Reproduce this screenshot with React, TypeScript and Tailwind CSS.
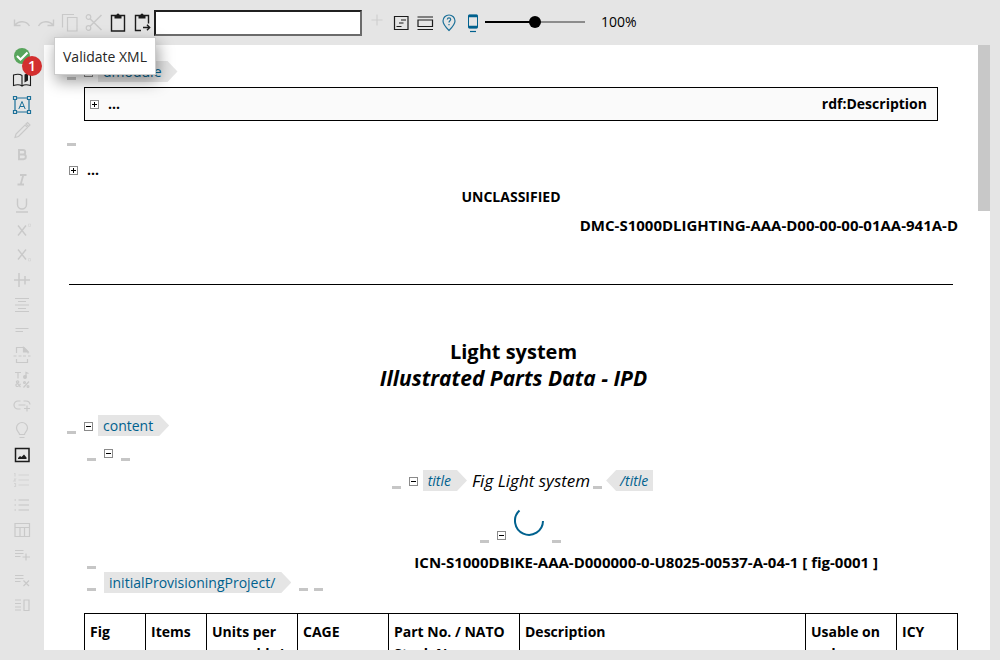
import type { ReactNode } from "react";

type IconDef = { name: string; tone: string; art: ReactNode };

const FAINT = "text-[#c9c9c9]";
const DARK = "text-[#1c1c1c]";
const BLUE = "text-[#1d7199]";

function Icon({ children }: { children: ReactNode }) {
  return (
    <svg viewBox="0 0 24 24" className="size-6 shrink-0" fill="none" stroke="currentColor" strokeWidth="1.2" aria-hidden="true">
      {children}
    </svg>
  );
}

function ToolButton({ icon, first }: { icon: IconDef; first?: boolean }) {
  return (
    <button type="button" aria-label={icon.name} className={`flex w-6 shrink-0 items-center justify-center ${first ? "h-[22px]" : "h-6"} ${icon.tone}`}>
      <Icon>{icon.art}</Icon>
    </button>
  );
}

const editTools: IconDef[] = [
  { name: "Undo", tone: FAINT, art: <path d="M4.5 9.5v6h6M5 15c3.5-4.5 11.5-4.5 14.5 1" strokeWidth="1.4" /> },
  { name: "Redo", tone: FAINT, art: <path d="M19.5 9.5v6h-6M19 15c-3.5-4.5-11.5-4.5-14.5 1" strokeWidth="1.4" /> },
  { name: "Copy", tone: FAINT, art: <path d="M9.5 7.5h9.500v13.500H9.500zM4.500 17.500v-13H16" /> },
  {
    name: "Cut",
    tone: FAINT,
    art: (
      <>
        <circle cx="6.5" cy="7" r="2.3" />
        <circle cx="6.5" cy="18" r="2.3" />
        <path d="M8 8.700L19.500 20M8 16.300L19.500 5" strokeWidth="1.5" />
      </>
    ),
  },
  {
    name: "Paste",
    tone: DARK,
    art: (
      <>
        <path d="M5.500 5.500h13v15.500h-13z" strokeWidth="1.4" />
        <path d="M8.500 5h2a1.500 1.500 0 013 0h2v3.500h-7z" fill="currentColor" stroke="none" />
      </>
    ),
  },
  {
    name: "Paste as",
    tone: DARK,
    art: (
      <>
        <path d="M11 20.500H5.500v-15h13v8M13 17.500h6.500M17 14.800l2.700 2.700-2.700 2.700" strokeWidth="1.4" />
        <path d="M8.500 5h2a1.500 1.500 0 013 0h2v3.500h-7z" fill="currentColor" stroke="none" />
      </>
    ),
  },
];

const viewTools: IconDef[] = [
  { name: "Add", tone: "text-[#cfcfcf]", art: <path d="M12 4.500v11M6.500 10h11" /> },
  {
    name: "Show comments",
    tone: DARK,
    art: <path d="M5.500 6.500h13.500v13H5.500zM12 10h5M10 13h4.500M7.500 16.500h5" />,
  },
  { name: "Show blocks", tone: DARK, art: <path d="M4.500 7h15.500M4.500 19.500h15.500M5 10h14.500v6.500H5z" /> },
  {
    name: "Help location",
    tone: BLUE,
    art: (
      <>
        <path d="M12 20.500C8 16.500 6 14 6 11a6 6 0 0112 0c0 3-2 5.500-6 9.500z" />
        <path d="M10.300 9.500c.2-2.200 3.400-2 3.400 0 0 1.300-1.700 1.300-1.700 3M12 14v1.200" />
      </>
    ),
  },
  {
    name: "Device preview",
    tone: "text-[#00618e]",
    art: (
      <>
        <rect x="7.5" y="5" width="9" height="13" rx=".8" strokeWidth="1" />
        <path d="M7.500 6h9M7.500 17h9" strokeWidth="2.5" />
        <path d="M9 21.500h6" />
      </>
    ),
  },
];

const sideTools: IconDef[] = [
  {
    name: "Validate XML",
    tone: "text-[#58a55c]",
    art: (
      <>
        <circle cx="12" cy="12" r="8" fill="currentColor" stroke="none" />
        <path d="M7 12l3.500 3.500 7-7" stroke="#fff" strokeWidth="2.2" />
      </>
    ),
  },
  {
    name: "Dictionary",
    tone: DARK,
    art: (
      <>
        <path d="M12 17.500V7.500c-2-1.500-5.500-1.500-8.500-.5v10.500c3-1 6.500-1 8.500.5 2-1.500 5.500-1.500 8.500-.5V7l-2-.4" strokeWidth="1.1" />
        <path d="M14.500 6.500l3.500-1.500v7.500l-3.500 2z" fill="currentColor" stroke="none" />
      </>
    ),
  },
  {
    name: "Text frame",
    tone: BLUE,
    art: (
      <>
        <path d="M7 5h10M7 19h10M5 7v10M19 7v10" />
        <path d="M3.500 3.500h3v3h-3zM17.500 3.500h3v3h-3zM3.500 17.500h3v3h-3zM17.500 17.500h3v3h-3z" />
        <path d="M8.800 16L12 8.500l3.200 7.500M10 13.500h4" strokeWidth="1" />
      </>
    ),
  },
  { name: "Edit", tone: FAINT, art: <path d="M5 19.500l1-3.500 9-9 2.500 2.500-9 9zM16 6l1.500-1.500L20 7l-1.500 1.500z" /> },
  { name: "Bold", tone: FAINT, art: <path d="M9 7h4a2.200 2.200 0 010 4.400H9zM9 11.500h4.500a2.300 2.300 0 010 4.700H9z" strokeWidth="1.9" /> },
  { name: "Italic", tone: FAINT, art: <path d="M10 7h6.500M7.500 16.500h6.500M13.300 7L10.700 16.500" strokeWidth="1.8" /> },
  { name: "Underline", tone: FAINT, art: <path d="M7.500 5.500v6a4.500 4.500 0 009 0v-6M6 19h12" strokeWidth="1.4" /> },
  {
    name: "Superscript",
    tone: FAINT,
    art: (
      <>
        <path d="M8 7.500l8 10M16 7.500l-8 10" strokeWidth="1.4" />
        <path d="M18.500 6h2v2.500h-2z" strokeWidth=".4" />
      </>
    ),
  },
  {
    name: "Subscript",
    tone: FAINT,
    art: (
      <>
        <path d="M8 6.500l8 10M16 6.500l-8 10" strokeWidth="1.4" />
        <path d="M18.500 15.500h2V18h-2z" strokeWidth=".4" />
      </>
    ),
  },
  { name: "Align objects", tone: FAINT, art: <path d="M4 12h16M9 5v14M15 8v8.500" strokeWidth="1.5" /> },
  { name: "Center", tone: FAINT, art: <path d="M5 5.500h14M8 8.500h8M5 12h14M8 15.500h8M5 18.500h14" /> },
  { name: "Short lines", tone: FAINT, art: <path d="M5.500 10.500h13M5.500 13.500h7.500" /> },
  {
    name: "Page break",
    tone: FAINT,
    art: (
      <>
        <path d="M6.500 10V4.500h7.500l4 4v2M6.500 16v3.500h11V16M3.500 13h3M8.500 13h3M13 13h3M18 13h2.500" />
        <path d="M13.500 4.500v4.500H18z" fill="currentColor" />
      </>
    ),
  },
  {
    name: "Special characters",
    tone: FAINT,
    art: (
      <>
        <path d="M5 4.500h6M8 4.500v6M16 8.500V4.500l2.500 1" />
        <circle cx="15" cy="9" r="1.4" fill="currentColor" />
        <path d="M10.500 19L6.500 14.300c-.5-1.800 2.700-1.800 2.200 0L6 16.500c-.5 2.800 3 2.800 4.500-.8M19 13.500l-5.500 6" />
        <circle cx="14.5" cy="14.5" r=".9" />
        <circle cx="18" cy="18.5" r=".9" />
      </>
    ),
  },
  { name: "Add link", tone: FAINT, art: <path d="M10.500 8H8a4 4 0 000 8h2.500M13.500 8H16a4 4 0 014 3.500M8.500 12h7M17 12.500v6M14 15.500h6" /> },
  { name: "Hint", tone: FAINT, art: <path d="M9.500 16.500c0-2-3-3-3-6.500a5.500 5.500 0 0111 0c0 3.500-3 4.500-3 6.500zM9.500 19.500h5" /> },
  {
    name: "Insert image",
    tone: DARK,
    art: (
      <>
        <path d="M5.500 5.500h13.500v13H5.500z" strokeWidth="1.5" />
        <path d="M8 16v-1l2-2 1.500 1 2.500-2.500 2.500 3V16z" fill="currentColor" stroke="none" />
      </>
    ),
  },
  { name: "Numbered list", tone: "text-[#d4d4d4]", art: <path d="M8.500 7H19M8.500 12H19M8.500 17H19M4 5.500h1v3M4 11h1.500l-1.500 2h2M4 15.500h1.500v3H4" /> },
  { name: "Bulleted list", tone: "text-[#d0d0d0]", art: <path d="M8.500 7H19M8.500 12H19M8.500 17H19M4.500 7H6M4.500 12H6M4.500 17H6" strokeWidth="1.4" /> },
  { name: "Insert table", tone: FAINT, art: <path d="M5 5.500h14.500v13H5zM5 9.500h14.500M10 9.500v9M14.500 9.500v9" /> },
  { name: "Add row", tone: FAINT, art: <path d="M5 7.500h8.500M5 10.500h8.500M5 13.500h5.500M16 10.500v7M12.500 14h7.500" /> },
  { name: "Remove row", tone: FAINT, art: <path d="M5 7.500h8.500M5 10.500h8.500M5 13.500h5.500M13.500 12.500l5.500 5.500M19 12.500L13.500 18" /> },
  { name: "Columns", tone: FAINT, art: <path d="M5 7h6M5 10.500h6M5 14h6M5 17h6M14 7h5v10.500h-5z" /> },
];

function Dash() {
  return <span className="mb-0.5 h-[3px] w-[9px] shrink-0 bg-[#c6c6c6]" />;
}

function Toggle({ open }: { open?: boolean }) {
  return (
    <button
      type="button"
      aria-label={open ? "Collapse" : "Expand"}
      className="mb-[5px] flex size-[9px] shrink-0 items-center justify-center border border-[#8a8a8a] bg-white text-black"
    >
      <svg viewBox="0 0 7 7" className="size-[7px] shrink-0" stroke="currentColor" strokeWidth="1" aria-hidden="true">
        <path d={open ? "M1 3.500h5" : "M1 3.500h5M3.500 1v5"} />
      </svg>
    </button>
  );
}

function Tag({ children, end }: { children: ReactNode; end?: boolean }) {
  return (
    <span
      className={`h-[21px] bg-[#e5e5e5] text-sm/[21px] text-[#00618e] ${
        end
          ? "pr-[5px] pl-3.5 [clip-path:polygon(10px_0,100%_0,100%_100%,10px_100%,0_50%)]"
          : "pr-4 pl-[5px] [clip-path:polygon(0_0,calc(100%-10px)_0,100%_50%,calc(100%-10px)_100%,0_100%)]"
      }`}
    >
      {children}
    </span>
  );
}

const columns = [
  { label: "Fig", width: "w-[61px]" },
  { label: "Items", width: "w-[61px]" },
  { label: "Units per assembly/", width: "w-[91px]" },
  { label: "CAGE", width: "w-[91px]" },
  { label: "Part No. / NATO Stock No.", width: "w-[131px]" },
  { label: "Description", width: "" },
  { label: "Usable on code", width: "w-[91px]" },
  { label: "ICY", width: "w-[61px]" },
];

export default function App() {
  return (
    <div className="flex h-screen flex-col overflow-hidden bg-[#e5e5e5] font-['Open_Sans','Noto_Sans',sans-serif] text-sm text-black">
      <header className="flex h-[45px] shrink-0 items-start pt-2.5 pl-2.5">
        {editTools.map((t) => (
          <ToolButton key={t.name} icon={t} />
        ))}
        <input
          type="text"
          aria-label="Element"
          className="mr-[3px] h-[26px] w-52 border-2 border-t-[#202020] border-r-[#6b6b6b] border-b-[#6b6b6b] border-l-[#202020] bg-white px-1 outline-none"
        />
        {viewTools.map((t) => (
          <ToolButton key={t.name} icon={t} />
        ))}
        <input
          type="range"
          aria-label="Zoom"
          min="0"
          max="200"
          defaultValue="100"
          className="h-6 w-[100px] appearance-none bg-[linear-gradient(to_right,#000_50%,#8c8c8c_50%)] bg-[length:100%_2px] bg-center bg-no-repeat [&::-webkit-slider-thumb]:size-3 [&::-webkit-slider-thumb]:appearance-none [&::-webkit-slider-thumb]:rounded-full [&::-webkit-slider-thumb]:bg-black"
        />
        <span className="ml-4 text-sm/6">100%</span>
      </header>

      <div className="flex min-h-0 flex-1 pr-2.5 pb-2.5">
        <nav aria-label="Formatting" className="relative flex w-11 shrink-0 flex-col items-center gap-px">
          {sideTools.map((t, i) => (
            <ToolButton key={t.name} icon={t} first={i === 0} />
          ))}
          <span className="absolute top-[11px] left-[22px] flex size-5 items-center justify-center rounded-full bg-[#d32f2f] text-sm font-semibold text-white">
            1
          </span>
          <div
            role="tooltip"
            className="absolute -top-2 left-[54px] z-10 border border-[#cccccc] bg-white px-2 pt-0.5 text-sm/[34px] font-medium whitespace-nowrap text-[#262626] shadow-[2px_6px_16px_rgba(0,0,0,0.4)]"
          >
            Validate XML
          </div>
        </nav>

        <main className="min-w-0 flex-1 overflow-hidden bg-white pr-2 pl-[23px]">
          <div className="mt-4 flex items-end">
            <Dash />
            <span className="w-2" />
            <Toggle open />
            <span className="w-[5px]" />
            <Tag>dmodule</Tag>
          </div>

          <section className="mt-[5px] mr-[32px] ml-[17px] flex h-[34px] items-center border border-black bg-[#fafafa] pr-2.5 pl-[5px] font-bold">
            <span className="flex items-end gap-[9px]">
              <Toggle />
              <span>...</span>
            </span>
            <span className="ml-auto">rdf:Description</span>
          </section>

          <div className="mt-5 flex h-[7px] items-end">
            <Dash />
          </div>
          <div className="mt-3 flex h-5 items-end gap-[9px] pl-0.5 font-bold">
            <Toggle />
            <span className="leading-5">...</span>
          </div>

          <p className="mt-[3px] mr-[17px] ml-0.5 text-center leading-7 font-bold">UNCLASSIFIED</p>
          <p className="mr-3 text-right text-[15px]/7 font-bold">DMC-S1000DLIGHTING-AAA-D00-00-00-01AA-941A-D</p>
          <hr className="mt-[45px] mr-[17px] ml-0.5 border-t border-black" />

          <h1 className="mt-[53px] mr-3 ml-0.5 text-center text-xl/[27px] font-bold">
            Light system
            <em className="block text-[21px]/[27px]">Illustrated Parts Data - IPD</em>
          </h1>

          <div className="mt-[23px] flex items-end">
            <Dash />
            <span className="w-2" />
            <Toggle open />
            <span className="w-[5px]" />
            <Tag>content</Tag>
          </div>
          <div className="mt-1.5 flex h-[21px] items-end gap-2 pl-5">
            <Dash />
            <Toggle open />
            <Dash />
          </div>

          <div className="mt-[7px] ml-2 flex items-end justify-center italic">
            <Dash />
            <span className="w-2" />
            <Toggle open />
            <span className="w-[5px]" />
            <Tag>title</Tag>
            <span className="mr-[3px] ml-[5px] text-[17px]/[21px]">Fig Light system</span>
            <Dash />
            <span className="w-1" />
            <Tag end>/title</Tag>
          </div>

          <div className="mt-[15px] ml-1 flex h-[39px] items-end justify-center gap-2">
            <Dash />
            <Toggle open />
            <svg viewBox="0 0 30 30" className="mb-[9px] size-[30px]" fill="none" stroke="#00618e" strokeWidth="2" role="img" aria-label="Loading">
              <path d="M5.500 4.500A14 14 0 1029 15" />
            </svg>
            <Dash />
          </div>

          <p className="mt-[3px] pr-[92px] text-right text-[15px]/7 font-bold">ICN-S1000DBIKE-AAA-D000000-0-U8025-00537-A-04-1 [ fig-0001 ]</p>
          <div className="-mt-2.5 flex h-[5px] items-end pl-5">
            <Dash />
          </div>
          <div className="mt-px flex items-end pl-5">
            <Dash />
            <span className="w-2" />
            <Tag>initialProvisioningProject/</Tag>
            <span className="w-2" />
            <Dash />
            <span className="w-1.5" />
            <Dash />
          </div>

          <div className="mt-5 mr-3 ml-[17px]">
            <table className="w-full table-fixed border-collapse border border-black">
              <thead>
                <tr>
                  {columns.map((c) => (
                    <th key={c.label} scope="col" className={`border border-black px-[5px] py-[7px] text-left align-top leading-[22px] font-bold ${c.width}`}>
                      {c.label}
                    </th>
                  ))}
                </tr>
              </thead>
            </table>
          </div>
        </main>
        <div className="w-3 shrink-0 bg-white">
          <div className="h-[166px] bg-[#c8c8c8]" />
        </div>
      </div>
    </div>
  );
}
